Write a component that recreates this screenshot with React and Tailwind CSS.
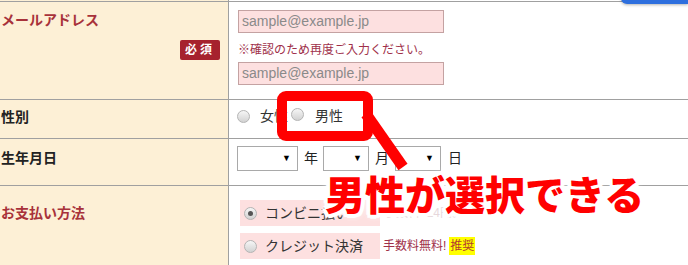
const Radio = ({ checked }) => (
  <span className="relative inline-flex h-[13px] w-[13px] shrink-0 items-center justify-center rounded-full border border-[#b4b4b4] bg-linear-to-b from-[#f6f6f6] to-[#d2d2d2]">
    {checked && <span className="h-[5px] w-[5px] rounded-full bg-[#555]" />}
  </span>
);

const Select = ({ w }) => (
  <div
    className={`flex h-[25px] items-center justify-end border border-[#a9a9a9] bg-white pr-[6px] text-[9px] text-black ${w}`}
  >
    ▼
  </div>
);

const Label = ({ children, red, pt }) => (
  <div
    className={`text-[14px] font-bold leading-[20px] ${pt} ${red ? "text-[#a8323a]" : "text-[#222]"}`}
  >
    {children}
  </div>
);

export default function App() {
  return (
    <div className="relative h-[265px] w-[688px] overflow-hidden bg-white font-['Liberation_Sans','Noto_Sans_CJK_JP',sans-serif]">
      {/* previous row edge */}
      <div className="flex h-px">
        <div className="w-[229px] border-r border-[#a0a0a0] bg-[#fdf0d6]" />
        <div className="flex-1" />
      </div>

      {/* メールアドレス */}
      <div className="flex h-[98px] border-t border-[#a0a0a0]">
        <div className="flex w-[229px] flex-col border-r border-[#a0a0a0] bg-[#fdf0d6] pl-[1px] pr-[8px]">
          <Label red pt="pt-[8px]">メールアドレス</Label>
          <div className="mt-[10px] flex justify-end">
            <span className="flex h-[20px] items-center rounded-[2px] bg-[#a6222e] px-[5px] text-[12px] font-bold tracking-[3px] text-white">
              必須
            </span>
          </div>
        </div>
        <div className="flex flex-col pl-[9px] pt-[8px]">
          <div className="flex h-[23px] w-[206px] items-center border border-[#c4a2a2] bg-[#fde0e0] pl-[3px] text-[14px] text-[#8a8a8a]">
            sample@example.jp
          </div>
          <div className="mt-[8px] text-[12px] leading-[18px] text-[#a0304a]">
            ※確認のため再度ご入力ください。
          </div>
          <div className="mt-[3px] flex h-[23px] w-[206px] items-center border border-[#c4a2a2] bg-[#fde0e0] pl-[3px] text-[14px] text-[#8a8a8a]">
            sample@example.jp
          </div>
        </div>
      </div>

      {/* 性別 */}
      <div className="flex h-[39px] border-t border-[#a0a0a0]">
        <div className="w-[229px] border-r border-[#a0a0a0] bg-[#fdf0d6] pl-[1px]">
          <Label pt="pt-[7px]">性別</Label>
        </div>
        <div className="flex items-start pl-[8px] pt-[7px] text-[14px] leading-[18px] text-[#333]">
          <div className="flex h-[18px] items-center">
            <Radio />
            <span className="ml-[10px]">女性</span>
            <span className="ml-[3px]">
              <Radio />
            </span>
            <span className="ml-[11px]">男性</span>
          </div>
        </div>
      </div>

      {/* 生年月日 */}
      <div className="flex h-[47px] border-t border-[#a0a0a0]">
        <div className="w-[229px] border-r border-[#a0a0a0] bg-[#fdf0d6] pl-[1px]">
          <Label pt="pt-[9px]">生年月日</Label>
        </div>
        <div className="flex items-center self-start pl-[8px] pt-[7px] text-[14px] text-[#222]">
          <Select w="w-[61px]" />
          <span className="ml-[6px] mr-[5px]">年</span>
          <Select w="w-[46px]" />
          <span className="ml-[6px] mr-[6px]">月</span>
          <Select w="w-[46px]" />
          <span className="ml-[7px]">日</span>
        </div>
      </div>

      {/* お支払い方法 */}
      <div className="flex h-[80px] border-t border-[#a0a0a0]">
        <div className="w-[229px] border-r border-[#a0a0a0] bg-[#fdf0d6] pl-[1px]">
          <Label red pt="pt-[17px]">お支払い方法</Label>
        </div>
        <div className="flex flex-col gap-[7px] pl-[11px] pt-[14px] text-[14px] text-[#333]">
          <div className="flex items-center">
            <div className="flex h-[26px] w-[140px] items-center bg-[#fde0e0] pl-[4px]">
              <Radio checked />
              <span className="ml-[8px]">コンビニ払い</span>
            </div>
            <span className="ml-[4px] text-[12px] text-[#e6d6da]">手数料324円。</span>
          </div>
          <div className="flex items-center">
            <div className="flex h-[26px] w-[140px] items-center bg-[#fde0e0] pl-[4px]">
              <Radio />
              <span className="ml-[8px]">クレジット決済</span>
            </div>
            <span className="ml-[3px] text-[12px] text-[#a0304a]">手数料無料!</span>
            <span className="ml-[3px] bg-[#ffff00] px-[1px] text-[12px] leading-[18px] text-[#b03a2e]">
              推奨
            </span>
          </div>
        </div>
      </div>

      {/* blue button edge, top right */}
      <div className="absolute right-0 top-[-20px] h-[24px] w-[67px] rounded-bl-[6px] bg-[#2e6fde] shadow-[0_1px_3px_rgba(0,0,0,0.3)]" />

      {/* annotation */}
      <svg className="absolute left-0 top-0" width="688" height="265" viewBox="0 0 688 265">
        <rect x="282" y="96" width="86" height="40" rx="4" fill="none" stroke="#ff0000" strokeWidth="10" />
        <line x1="366" y1="114" x2="403" y2="167" stroke="#ff0000" strokeWidth="11" />
      </svg>
      <div className="absolute left-[325px] top-[173px] whitespace-nowrap font-['Noto_Sans_CJK_JP',sans-serif] text-[40px] font-black leading-[40px] text-[#ff0000] [text-shadow:4px_0_0_#fff,-4px_0_0_#fff,0_4px_0_#fff,0_-4px_0_#fff,3px_3px_0_#fff,-3px_-3px_0_#fff,3px_-3px_0_#fff,-3px_3px_0_#fff,0_0_8px_#fff,0_0_8px_#fff]">
        男性が選択できる
      </div>
    </div>
  );
}
